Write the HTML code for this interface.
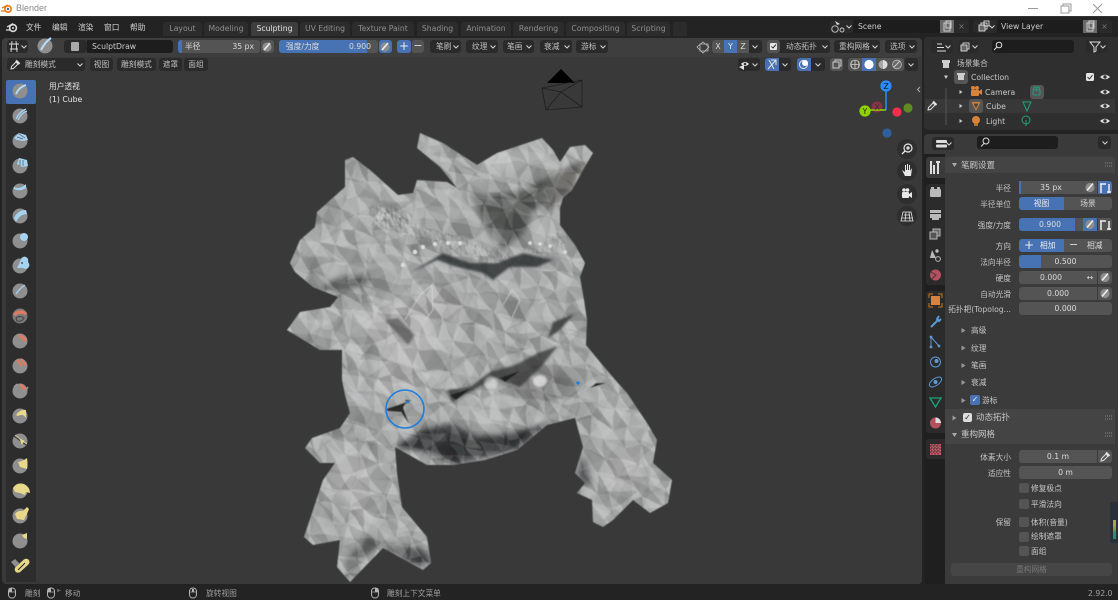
<!DOCTYPE html>
<html><head><meta charset="utf-8"><title>Blender</title>
<style>
html,body{margin:0;padding:0;background:#232323;}
#r{position:relative;width:1118px;height:600px;overflow:hidden;background:#232323;font:7.7px/15px "DejaVu Sans","Noto Sans CJK SC",sans-serif;color:#c8c8c8;filter:blur(.35px);}
#r>div,#r>svg{position:absolute;}
.t{position:absolute;white-space:nowrap;height:13px;line-height:15px;font-size:7.7px;}
.b{position:absolute;background:#545454;border-radius:3px;height:13px;line-height:14.5px;text-align:center;color:#dcdcdc;white-space:nowrap;font-size:7.7px;}
.u{background:#4772b3;color:#eee;}
.d{background:#2a2a2a;color:#c0c0c0;}
.k{background:#1d1d1d;text-align:left;color:#ccc;}
.tab{position:absolute;top:22px;height:14px;line-height:14px;background:#2c2c2c;color:#8f8f8f;text-align:center;border-radius:3px 3px 0 0;font-size:7.7px;}
.l{position:absolute;text-align:right;height:13px;line-height:15px;color:#c4c4c4;left:945px;width:66px;white-space:nowrap;font-size:7.7px;}
.c{position:absolute;width:10px;height:10px;background:#545454;border-radius:2px;left:1019px;}
</style></head><body>
<div id="r">
<div style="left:0;top:0;width:1118px;height:16px;background:#fff;"></div>
<div style="left:0;top:16px;width:1118px;height:1px;background:#333;"></div>
<span class="t" style="left:16px;top:2px;color:#8a8a8a;font:9px/13px 'Liberation Sans',sans-serif;">Blender</span>

<div style="left:2px;top:38px;width:920px;height:546px;background:#393939;border-radius:4px;"></div>
<div style="left:2px;top:38px;width:920px;height:19px;background:#3e3e3e;border-radius:4px 4px 0 0;"></div>
<div style="left:924px;top:37px;width:194px;height:93px;background:#2f2f2f;border-radius:4px 0 0 4px;"></div>
<div style="left:924px;top:134px;width:194px;height:450px;background:#1f1f1f;border-radius:4px 0 0 4px;"></div>
<div style="left:945px;top:154px;width:173px;height:430px;background:#3b3b3b;"></div>
<div style="left:924px;top:134px;width:194px;height:20px;background:#3a3a3a;border-radius:4px 0 0 0;"></div>
<div style="left:945px;top:157px;width:170px;height:16px;background:#444;border-radius:3px 3px 0 0;"></div>
<div style="left:945px;top:409px;width:170px;height:35px;background:#444;"></div>
<div style="left:926px;top:157px;width:19px;height:21px;background:#3b3b3b;border-radius:3px 0 0 3px;"></div>
<div style="left:926px;top:184px;width:19px;height:101px;background:#2b2b2b;border-radius:3px 0 0 3px;"></div>
<div style="left:926px;top:291px;width:19px;height:142px;background:#2b2b2b;border-radius:3px 0 0 3px;"></div>
<div style="left:926px;top:439px;width:19px;height:20px;background:#2b2b2b;border-radius:3px 0 0 3px;"></div>
<div style="left:925px;top:99px;width:190px;height:14px;background:#383838;"></div>

<!-- mesh + icons -->
<svg width="1118" height="600" viewBox="0 0 1118 600" style="left:0;top:0;">
<defs>
<g id="tile">
<path fill="#fff" fill-opacity=".17" d="M0 0L18 17L3 22ZM38 0L62 4L58 18ZM18 17L44 24L37 37ZM58 18L80 38L63 43ZM3 22L24 42L0 38ZM37 37L63 43L61 57ZM0 38L17 58L4 63ZM63 43L84 63L61 57ZM17 58L38 80L22 83ZM42 62L62 84L38 80Z"/>
<path fill="#fff" fill-opacity=".08" d="M22 3L38 0L44 24ZM62 4L80 0L83 22ZM18 17L37 37L24 42ZM44 24L63 43L37 37ZM24 42L37 37L42 62ZM61 57L84 63L80 80ZM4 63L22 83L0 80Z"/>
<path fill="#000" fill-opacity=".06" d="M0 0L22 3L18 17ZM44 24L58 18L63 43ZM83 22L80 38L58 18ZM0 38L24 42L17 58ZM37 37L61 57L42 62ZM17 58L42 62L38 80Z"/>
<path fill="#000" fill-opacity=".12" d="M22 3L44 24L18 17ZM38 0L58 18L44 24ZM3 22L18 17L24 42ZM24 42L42 62L17 58ZM61 57L80 80L62 84ZM42 62L61 57L62 84Z"/>
</g>
<pattern id="p1" width="80" height="80" patternUnits="userSpaceOnUse" patternTransform="translate(290 130) rotate(12) scale(.85)"><use href="#tile"/></pattern>
<pattern id="p2" width="80" height="80" patternUnits="userSpaceOnUse" patternTransform="translate(300 140) rotate(-38) scale(1.15)"><use href="#tile"/></pattern>
<pattern id="p4" width="80" height="80" patternUnits="userSpaceOnUse" patternTransform="translate(270 100) rotate(70) scale(1.9)"><use href="#tile"/></pattern>
<pattern id="p3" width="80" height="80" patternUnits="userSpaceOnUse" patternTransform="scale(.2) rotate(20)"><use href="#tile"/></pattern>
<clipPath id="sil"><path d="M417 148L420 133L443 143L477 165L497 153L527 143L542 138L553 150L560 162L570 147L585 145L593 153L583 170L572 190L563 198L560 208L560 225L575 245L585 263L580 277L584 300L587 320L586 345L600 362L617 382L627 393L637 408L647 423L657 440L653 463L672 480L668 503L650 513L633 500L613 520L603 527L593 522L592 500L577 493L585 483L575 473L583 447L575 418L547 425L517 450L485 460L453 465L427 465L395 447L397 473L402 507L427 537L431 563L423 570L383 548L350 582L337 567L340 540L313 545L304 537L313 510L323 480L335 463L320 463L305 448L312 438L340 428L350 413L345 395L342 380L342 350L320 350L287 330L300 312L330 307L338 297L313 287L295 272L290 263L300 240L315 227L317 212L345 187L345 160L353 157L370 170L398 195L413 193L417 180L447 182L457 188L440 167Z"/></clipPath>
<filter id="bl" x="-30%" y="-30%" width="160%" height="160%"><feGaussianBlur stdDeviation="7"/></filter>
<filter id="bm" x="-30%" y="-30%" width="160%" height="160%"><feGaussianBlur stdDeviation="3"/></filter>
<filter id="bs" x="-30%" y="-30%" width="160%" height="160%"><feGaussianBlur stdDeviation="1.1"/></filter>
<filter id="soft" x="-5%" y="-5%" width="110%" height="110%"><feGaussianBlur stdDeviation=".5"/></filter>
<filter id="warp" x="0" y="0" width="100%" height="100%"><feTurbulence type="fractalNoise" baseFrequency=".03" numOctaves="2" seed="7" result="n"/><feDisplacementMap in="SourceGraphic" in2="n" scale="11" xChannelSelector="R" yChannelSelector="G"/></filter>
<path id="ch" d="M-2.5 -1.5L0 1L2.5 -1.5" fill="none" stroke="#d0d0d0" stroke-width="1.1"/>
<g id="eye"><path d="M-5 0Q0 -4.6 5 0Q0 4.6 -5 0Z" fill="#e0e0e0"/><circle r="1.7" fill="#333"/></g>
<g id="drop"><path d="M-4 4L-3.5 1.5L1 -3L3 -1L-1.5 3.5Z" fill="none" stroke="#e0e0e0" stroke-width="1"/><path d="M1 -4.5L4.5 -1" stroke="#e0e0e0" stroke-width="2"/></g>
<g id="pen"><circle r="4.6" fill="#8c8c8c"/><path d="M-3 3L3 -4" stroke="#eee" stroke-width="1.6"/></g>
<g id="mouse"><rect x="-3.5" y="-5" width="7" height="10" rx="3.2" fill="none" stroke="#b4b4b4" stroke-width="1"/><path d="M-3 -1H3" stroke="#b4b4b4" stroke-width=".7"/></g>
<circle id="sp" r="7.5" fill="#8f8f8f"/>
</defs>

<!-- sculpt -->
<g filter="url(#soft)">
<g clip-path="url(#sil)">
<rect x="270" y="115" width="420" height="480" fill="#a4a6a6"/>
<g filter="url(#bl)">
<ellipse cx="395" cy="345" rx="42" ry="50" fill="#b2b2b2"/>
<ellipse cx="355" cy="490" rx="28" ry="42" fill="#aeaeae"/>
<ellipse cx="625" cy="470" rx="26" ry="30" fill="#aaaaaa"/>
<ellipse cx="605" cy="400" rx="14" ry="16" fill="#b0b0b0"/>
<ellipse cx="540" cy="385" rx="35" ry="22" fill="#858585"/>
<ellipse cx="500" cy="162" rx="40" ry="9" fill="#bbbbbb"/>
<ellipse cx="305" cy="285" rx="14" ry="22" fill="#909393"/>
<ellipse cx="445" cy="305" rx="35" ry="20" fill="#a6a6a6"/>
<ellipse cx="335" cy="520" rx="14" ry="18" fill="#8e9090"/>
</g>
<g filter="url(#bm)">
<path d="M467 192L487 197L523 190L557 173L553 197L533 210L527 230L503 250L487 230Z" fill="#454847" fill-opacity=".85"/>
<path d="M558 172L583 160L572 190L563 198L545 212Z" fill="#585552" fill-opacity=".85"/>
<path d="M395 447L423 430L453 423L477 437L513 433L570 417L547 425L517 450L453 465L427 453Z" fill="#2d302f" fill-opacity=".95"/>
<path d="M383 543L420 547L431 560L423 568L395 555Z" fill="#343837" fill-opacity=".9"/>
<path d="M337 277L370 273L368 284L342 292L320 290Z" fill="#3a3a39" fill-opacity=".75"/>
<path d="M575 473L585 483L577 493L592 480L585 455Z" fill="#3c403f" fill-opacity=".7"/>
<path d="M345 575L362 560L380 545L370 535L345 560Z" fill="#3c3c3c" fill-opacity=".6"/>
<path d="M505 345Q540 360 555 405" stroke="#6f7373" stroke-width="6" fill="none" opacity=".6"/>
<path d="M368 345Q370 400 350 430" stroke="#8b9191" stroke-width="8" fill="none" opacity=".45"/>
</g>
<g filter="url(#warp)">
<rect x="270" y="115" width="420" height="480" fill="url(#p4)" opacity=".35"/>
<rect x="270" y="115" width="420" height="480" fill="url(#p1)"/>
<rect x="270" y="115" width="420" height="480" fill="url(#p2)" opacity=".6"/>
</g>
<path d="M380 205L420 225L470 240L520 258L545 240L570 225L566 245L520 272L470 258L420 240L375 225Z" fill="url(#p3)" opacity=".7"/>
<path d="M362 205L372 222L400 232L415 215L395 205Z" fill="url(#p3)" opacity=".7"/>
<g filter="url(#bs)">
<path d="M410 273L443 253L470 263L497 263L523 253L553 260L537 267L510 267L493 280L483 273L457 267L437 260Z" fill="#2e3333" fill-opacity=".85"/>
<path d="M448 390L470 387L490 372L515 365L540 352L558 346L540 368L520 387L495 378L470 392L452 402Z" fill="#303333" fill-opacity=".75"/>
<path d="M553 322L574 314L560 330L548 338Z" fill="#2f3130" fill-opacity=".8"/>
<path d="M385 320L408 345L415 335L398 318Z" fill="#444" fill-opacity=".6"/>
<ellipse cx="491" cy="383" rx="6" ry="6" fill="#ddd" fill-opacity=".6"/>
<ellipse cx="540" cy="381" rx="7" ry="6" fill="#eee" fill-opacity=".75"/>
<ellipse cx="500" cy="402" rx="17" ry="7" fill="#ccc" fill-opacity=".5"/>
</g>
<path d="M386 409L398 405L412 400L404 400L408 402Q402 406 404 410L409 424L401 412L388 411Z" fill="#2b2b2b"/>
<path d="M590 388L606 383L596 383Z" fill="#222"/>
<path d="M450 395L470 389L456 400Z M500 378L520 371L505 382Z" fill="#222"/>
<g fill="#ddd"><circle cx="403" cy="265" r="2.2"/><circle cx="415" cy="252" r="2.2"/><circle cx="423" cy="247" r="2"/><circle cx="435" cy="244" r="2"/><circle cx="448" cy="243" r="2"/><circle cx="460" cy="243" r="2"/><circle cx="530" cy="243" r="1.8"/><circle cx="540" cy="244" r="1.8"/><circle cx="550" cy="246" r="1.8"/><circle cx="565" cy="252" r="1.8"/></g>
<path d="M405 320L420 295L432 285L433 310L425 320M503 305L512 290L520 300L512 318" fill="none" stroke="#eee" stroke-opacity=".5" stroke-width="1"/>
</g>
</g>
<circle cx="405" cy="409" r="19" fill="none" stroke="#1d7ee0" stroke-width="1.6"/>
<circle cx="408" cy="402" r="1.4" fill="#1d7ee0"/>
<circle cx="578" cy="383" r="1.6" fill="#1d7ee0"/>

<!-- camera wire -->
<path d="M547 83L561 69L575 83Z" fill="#000"/>
<path d="M542 88L582 80L582 107L546 110ZM542 88L561 92L582 107M546 110L561 92L582 80" fill="none" stroke="#1f1f1f" stroke-width=".8"/>

<!-- gizmo -->
<circle cx="877" cy="107" r="5.5" fill="#883246"/><circle cx="897" cy="112" r="4.6" fill="#f2304e"/><circle cx="908" cy="108" r="4.6" fill="#5f8a24"/><circle cx="887" cy="133" r="4.6" fill="#2f5f9c"/>
<path d="M886 91V110" stroke="#2a8cff" stroke-width="1.5"/><path d="M869 110H886" stroke="#8fd400" stroke-width="1.5"/>
<circle cx="886" cy="86" r="5.6" fill="#2a8cff"/><circle cx="865" cy="111" r="5.6" fill="#8fd400"/>
<!-- nav -->
<g fill="#2e2e2e"><circle cx="907" cy="149" r="10"/><circle cx="907" cy="171" r="10"/><circle cx="907" cy="194" r="10"/><circle cx="907" cy="216" r="10"/></g>
<g fill="none" stroke="#e8e8e8"><circle cx="908" cy="148" r="4" stroke-width="1.2"/><path d="M905 151L902 154M906 148H910M908 146V150" stroke-width="1.3"/></g>
<path d="M902 170L905 172V165H906V170H907V164H908V170H909V165H910V171L912 168L911 176H905Z" fill="#e8e8e8"/>
<g fill="#e8e8e8"><rect x="902" y="192" width="7" height="6" rx="1"/><circle cx="904" cy="190" r="1.8"/><circle cx="907.5" cy="190" r="1.8"/><path d="M909 194L912 192V198L909 196Z"/></g>
<path d="M903 212H911L913 221H901ZM904 215H910M902 218H912M906 212L905 221M909 212L910 221" fill="none" stroke="#e8e8e8" stroke-width=".8"/>

<!-- toolbar -->
<rect x="6" y="104" width="30" height="478" fill="#2d2d2d"/>
<rect x="6" y="80" width="30" height="24" rx="2" fill="#4772b3"/>
<g transform="translate(20,91)"><circle r="7.5" fill="#8f8f8f"/><path d="M-4 3Q-1 -4 6 -6" stroke="#b8defa" stroke-width="1.8" fill="none"/></g>
<g transform="translate(20,116)"><use href="#sp"/><path d="M-4 3Q-1 -4 6 -7M-2 4Q1 -3 7 -5" stroke="#a6d3f0" stroke-width="1.3" fill="none"/></g>
<g transform="translate(20,141)"><use href="#sp"/><path d="M-6 -3L-1 -8L6 -6L8 -1L3 0L-3 -1Z" fill="#a6d3f0"/><path d="M-3 -4L3 -2M-1 -7L5 -3" stroke="#555" stroke-width=".7"/></g>
<g transform="translate(20,166)"><use href="#sp"/><path d="M-3 -2L-1 -8L7 -6L8 0L2 1Z" fill="#a6d3f0"/><path d="M0 -6V0M3 -6V0" stroke="#555" stroke-width=".7"/></g>
<g transform="translate(20,191)"><use href="#sp"/><path d="M-6 -4Q0 -1 6 -7L6 -3Q0 1 -6 -2Z" fill="#a6d3f0"/></g>
<g transform="translate(20,216)"><use href="#sp"/><path d="M-6 2Q-2 -6 6 -6L7 -2Q0 -2 -4 6Z" fill="#a6d3f0"/></g>
<g transform="translate(20,241)"><use href="#sp"/><circle cx="4" cy="-4" r="4" fill="#a6d3f0"/></g>
<g transform="translate(20,266)"><use href="#sp"/><path d="M1 -7A3 3 0 0 1 8 -4A3 3 0 0 1 3 2L-3 2L-1 -2Z" fill="#a6d3f0"/><circle cx="2" cy="-3" r="1" fill="#555"/></g>
<g transform="translate(20,291)"><use href="#sp"/><path d="M-4 3Q0 -3 5 -6" stroke="#a6d3f0" stroke-width="1.3" fill="none"/></g>
<g transform="translate(20,316)"><circle r="7.5" fill="#7a7a7a"/><path d="M-7 -2Q0 -9 7 -3L5 -1Q0 -4 -5 0Z" fill="#e07a5f"/><path d="M-4 2Q0 -1 4 2Q2 6 -3 5Z" fill="none" stroke="#444"/></g>
<g transform="translate(20,341)"><use href="#sp"/><path d="M0 -7L7 -2L5 1L-2 -5Z" fill="#e07a5f"/></g>
<g transform="translate(20,366)"><use href="#sp"/><path d="M-3 -6L2 0M1 -7L6 -1" stroke="#e07a5f" stroke-width="2.2"/></g>
<g transform="translate(20,391)"><use href="#sp"/><path d="M-1 -6L4 0L6 -3L2 -7Z" fill="#e07a5f"/><path d="M-6 -4L-3 -7M6 -1L8 -4" stroke="#999" stroke-width="1.5"/></g>
<g transform="translate(20,416)"><use href="#sp"/><path d="M-4 -1Q0 -7 6 -6L6 2Q3 -3 -2 0Z" fill="#e8d88a"/></g>
<g transform="translate(20,441)"><use href="#sp"/><path d="M-6 -5L6 4" stroke="#333" stroke-width="1"/><path d="M-5 -6L7 3M0 -2L4 0L2 3Z" stroke="#e8d88a" fill="#e8d88a" stroke-width=".7"/></g>
<g transform="translate(20,466)"><use href="#sp"/><path d="M-2 -4Q3 -5 7 -8Q8 -2 7 3L0 1Z" fill="#e8d88a"/></g>
<g transform="translate(20,491)"><use href="#sp"/><path d="M-7 -3Q-3 -9 4 -7Q10 -4 10 2L6 1L5 4L0 2L-5 1Z" fill="#e8d88a"/></g>
<g transform="translate(20,516)"><use href="#sp"/><path d="M-5 -2Q-2 -6 3 -5L7 -9L9 -7L7 -2L4 4L-3 3Z" fill="#e8d88a"/></g>
<g transform="translate(20,541)"><use href="#sp"/><path d="M2 -6L7 -8L7 -2L4 -3Z" fill="#e8d88a"/></g>
<g transform="translate(20,566)"><path d="M-9 -4L-5 -7L2 0L-2 4Z" fill="#8f8f8f"/><rect x="-7" y="-3" width="18" height="7" rx="3.5" transform="rotate(-42 1 0)" fill="#e8d88a" stroke="#1f1f1f" stroke-width=".3"/><path d="M-2 4L5 -3" stroke="#222" stroke-width="1"/></g>

<!-- top blender logo -->
<g transform="translate(7,9)"><circle cx="1" r="3.2" fill="none" stroke="#e87d0d" stroke-width="1.7"/><path d="M-5 -1L1 -4M-6 2H-1" stroke="#e87d0d" stroke-width="1.3"/><circle cx="1" r="1.2" fill="#36a"/></g>
<g transform="translate(12,28)" fill="none" stroke="#ddd"><circle cx="1" r="3.4" stroke-width="1.6"/><path d="M-5 -1L1 -4.5M-6 2H-1" stroke-width="1.2"/><circle cx="1" r="1" fill="#ddd" stroke="none"/></g>
<!-- window ctrl -->
<path d="M1028 8.5H1038" stroke="#999"/><path d="M1061 6H1069V13H1061ZM1063 6V4H1071V11H1069" fill="none" stroke="#999"/><path d="M1093 4L1102 13M1102 4L1093 13" stroke="#999"/>
<path d="M676 28H684M680 24V32" stroke="#aaa"/>
</svg>

<!-- tabs -->
<div class="tab" style="left:163px;width:39px;">Layout</div>
<div class="tab" style="left:204px;width:44px;">Modeling</div>
<div class="tab" style="left:251px;width:47px;background:#3d3d3d;color:#e6e6e6;">Sculpting</div>
<div class="tab" style="left:300px;width:50px;">UV Editing</div>
<div class="tab" style="left:352px;width:62px;">Texture Paint</div>
<div class="tab" style="left:417px;width:41px;">Shading</div>
<div class="tab" style="left:461px;width:50px;">Animation</div>
<div class="tab" style="left:513px;width:51px;">Rendering</div>
<div class="tab" style="left:566px;width:59px;">Compositing</div>
<div class="tab" style="left:627px;width:43px;">Scripting</div>
<div class="tab" style="left:673px;width:14px;"></div>
<span class="t" style="left:26px;top:20px;color:#d4d4d4;">文件</span>
<span class="t" style="left:52px;top:20px;color:#d4d4d4;">编辑</span>
<span class="t" style="left:78px;top:20px;color:#d4d4d4;">渲染</span>
<span class="t" style="left:104px;top:20px;color:#d4d4d4;">窗口</span>
<span class="t" style="left:130px;top:20px;color:#d4d4d4;">帮助</span>

<!-- scene -->
<div class="b d" style="left:830px;top:20px;width:23px;"></div>
<div class="b k" style="left:853px;top:20px;width:87px;padding-left:5px;box-sizing:border-box;">Scene</div>
<div class="b" style="left:940px;top:20px;width:14px;background:#6a6a6a;border-radius:0;"></div>
<div class="b d" style="left:954px;top:20px;width:15px;color:#777;border-radius:0 3px 3px 0;">×</div>
<div class="b d" style="left:973px;top:20px;width:24px;"></div>
<div class="b k" style="left:997px;top:20px;width:86px;padding-left:4px;box-sizing:border-box;">View Layer</div>
<div class="b" style="left:1083px;top:20px;width:14px;background:#6a6a6a;border-radius:0;"></div>
<div class="b d" style="left:1097px;top:20px;width:15px;color:#777;border-radius:0 3px 3px 0;">×</div>

<!-- tool row 1 -->
<div class="b d" style="left:7px;top:40px;width:21px;"></div>
<div class="b d" style="left:64px;top:40px;width:23px;"></div>
<div class="b k" style="left:87px;top:40px;width:86px;padding-left:5px;box-sizing:border-box;border-radius:0 3px 3px 0;">SculptDraw</div>
<div class="b" style="left:178px;top:40px;width:82px;text-align:left;"><span style="position:absolute;left:0;top:0;width:4px;height:13px;background:#4772b3;border-radius:3px 0 0 3px;"></span><span style="position:absolute;left:7px;">半径</span><span style="position:absolute;right:6px;">35 px</span></div>
<div class="b" style="left:261px;top:40px;width:13px;"></div>
<div class="b" style="left:279px;top:40px;width:99px;text-align:left;overflow:hidden;"><span style="position:absolute;left:0;top:0;width:88px;height:13px;background:#4772b3;"></span><span style="position:absolute;left:7px;">强度/力度</span><span style="position:absolute;right:7px;">0.900</span></div>
<div class="b u" style="left:379px;top:40px;width:13px;"></div>
<div class="b u" style="left:397px;top:40px;width:14px;font-size:12px;line-height:12px;">+</div>
<div class="b" style="left:412px;top:40px;width:12px;font-size:11px;line-height:12px;">−</div>
<div class="b d" style="left:430px;top:40px;width:31px;text-align:left;padding-left:6px;box-sizing:border-box;">笔刷</div>
<div class="b d" style="left:466px;top:40px;width:32px;text-align:left;padding-left:6px;box-sizing:border-box;">纹理</div>
<div class="b d" style="left:503px;top:40px;width:31px;text-align:left;padding-left:4px;box-sizing:border-box;">笔画</div>
<div class="b d" style="left:540px;top:40px;width:32px;text-align:left;padding-left:4px;box-sizing:border-box;">衰减</div>
<div class="b d" style="left:576px;top:40px;width:32px;text-align:left;padding-left:5px;box-sizing:border-box;">游标</div>
<div class="b" style="left:712px;top:40px;width:12px;border-radius:3px 0 0 3px;">X</div>
<div class="b u" style="left:724px;top:40px;width:13px;border-radius:0;">Y</div>
<div class="b" style="left:737px;top:40px;width:12px;border-radius:0;">Z</div>
<div class="b d" style="left:749px;top:40px;width:13px;border-radius:0 3px 3px 0;"></div>
<div class="b d" style="left:767px;top:40px;width:63px;text-align:left;padding-left:19px;box-sizing:border-box;">动态拓扑</div>
<div class="b" style="left:767px;top:40px;width:13px;"></div>
<div class="b d" style="left:834px;top:40px;width:46px;text-align:left;padding-left:5px;box-sizing:border-box;">重构网格</div>
<div class="b d" style="left:885px;top:40px;width:32px;text-align:left;padding-left:5px;box-sizing:border-box;">选项</div>

<!-- tool row 2 -->
<div class="b d" style="left:7px;top:58px;width:78px;text-align:left;padding-left:18px;box-sizing:border-box;">雕刻模式</div>
<div class="b d" style="left:90px;top:58px;width:23px;">视图</div>
<div class="b d" style="left:117px;top:58px;width:39px;">雕刻模式</div>
<div class="b d" style="left:159px;top:58px;width:23px;">遮罩</div>
<div class="b d" style="left:184px;top:58px;width:24px;">面组</div>
<div class="b d" style="left:738px;top:58px;width:22px;"></div>
<div class="b u" style="left:765px;top:58px;width:14px;border-radius:3px 0 0 3px;"></div>
<div class="b d" style="left:779px;top:58px;width:12px;border-radius:0 3px 3px 0;"></div>
<div class="b u" style="left:797px;top:58px;width:14px;border-radius:3px 0 0 3px;"></div>
<div class="b d" style="left:811px;top:58px;width:14px;border-radius:0 3px 3px 0;"></div>
<div class="b" style="left:830px;top:58px;width:13px;"></div>
<div class="b" style="left:848px;top:58px;width:14px;border-radius:3px 0 0 3px;"></div>
<div class="b u" style="left:862px;top:58px;width:14px;border-radius:0;"></div>
<div class="b" style="left:876px;top:58px;width:14px;border-radius:0;"></div>
<div class="b" style="left:890px;top:58px;width:14px;border-radius:0 3px 3px 0;"></div>
<div class="b d" style="left:905px;top:58px;width:13px;"></div>

<span class="t" style="left:49px;top:79px;color:#e6e6e6;">用户透视</span>
<span class="t" style="left:49px;top:92px;color:#e6e6e6;">(1) Cube</span>

<!-- gizmo letters -->
<span class="t" style="left:883.5px;top:79px;color:#111;">Z</span>
<span class="t" style="left:862.5px;top:104px;color:#222;">Y</span>
<span class="t" style="left:874.5px;top:100px;color:#333;">X</span>

<!-- outliner -->
<div class="b d" style="left:931px;top:40px;width:22px;"></div>
<div class="b d" style="left:958px;top:40px;width:21px;"></div>
<div class="b k" style="left:992px;top:40px;width:82px;"></div>
<div class="b d" style="left:1086px;top:40px;width:22px;"></div>
<span class="t" style="left:957px;top:56px;">场景集合</span>
<span class="t" style="left:971px;top:70px;">Collection</span>
<span class="t" style="left:985px;top:85px;">Camera</span>
<span class="t" style="left:986px;top:99px;">Cube</span>
<span class="t" style="left:986px;top:114px;">Light</span>

<!-- properties -->
<div class="b d" style="left:932px;top:137px;width:22px;"></div>
<div class="b k" style="left:977px;top:136px;width:81px;"></div>
<div class="b d" style="left:1098px;top:136px;width:13px;"></div>
<span class="t" style="left:961px;top:159px;font-size:8.5px;">笔刷设置</span>
<div class="l" style="top:181px;">半径</div>
<div class="b" style="left:1019px;top:181px;width:64px;border-radius:3px 0 0 3px;"><span style="position:absolute;left:0;top:0;width:2px;height:13px;background:#4772b3;"></span>35 px</div>
<div class="b" style="left:1083px;top:181px;width:14px;border-radius:0;"></div>
<div class="b u" style="left:1098px;top:181px;width:14px;border-radius:0 3px 3px 0;"></div>
<div class="l" style="top:197px;">半径单位</div>
<div class="b u" style="left:1019px;top:197px;width:45px;border-radius:3px 0 0 3px;">视图</div>
<div class="b" style="left:1064px;top:197px;width:48px;border-radius:0 3px 3px 0;">场景</div>
<div class="l" style="top:218px;">强度/力度</div>
<div class="b" style="left:1019px;top:218px;width:64px;border-radius:3px 0 0 3px;"><span style="position:absolute;left:0;top:0;width:56px;height:13px;background:#4772b3;border-radius:3px 0 0 3px;"></span><span style="position:absolute;left:0;width:62px;">0.900</span></div>
<div class="b u" style="left:1083px;top:218px;width:14px;border-radius:0;"></div>
<div class="b" style="left:1098px;top:218px;width:14px;border-radius:0 3px 3px 0;"></div>
<div class="l" style="top:239px;">方向</div>
<div class="b u" style="left:1019px;top:239px;width:45px;border-radius:3px 0 0 3px;text-align:left;"><span style="position:absolute;left:5px;font-size:12px;line-height:12px;">+</span><span style="position:absolute;left:21px;">相加</span></div>
<div class="b" style="left:1064px;top:239px;width:48px;border-radius:0 3px 3px 0;text-align:left;"><span style="position:absolute;left:5px;font-size:11px;line-height:12px;">−</span><span style="position:absolute;left:23px;">相减</span></div>
<div class="l" style="top:255px;">法向半径</div>
<div class="b" style="left:1019px;top:255px;width:93px;"><span style="position:absolute;left:0;top:0;width:22px;height:13px;background:#4772b3;border-radius:3px 0 0 3px;"></span><span style="position:relative;">0.500</span></div>
<div class="l" style="top:271px;">硬度</div>
<div class="b" style="left:1019px;top:271px;width:64px;border-radius:3px 0 0 3px;">0.000</div>
<div class="b" style="left:1083px;top:271px;width:14px;border-radius:0;">↔</div>
<div class="b" style="left:1098px;top:271px;width:14px;border-radius:0 3px 3px 0;"></div>
<div class="l" style="top:287px;">自动光滑</div>
<div class="b" style="left:1019px;top:287px;width:78px;border-radius:3px 0 0 3px;">0.000</div>
<div class="b" style="left:1098px;top:287px;width:14px;border-radius:0 3px 3px 0;"></div>
<div class="l" style="top:302px;">拓扑耙(Topolog...</div>
<div class="b" style="left:1019px;top:302px;width:93px;">0.000</div>
<span class="t" style="left:971px;top:323px;">高级</span>
<span class="t" style="left:971px;top:341px;">纹理</span>
<span class="t" style="left:971px;top:358px;">笔画</span>
<span class="t" style="left:971px;top:375px;">衰减</span>
<div class="b u" style="left:970px;top:395px;width:10px;height:10px;line-height:10px;border-radius:2px;"><span style="font-size:8px;">✓</span></div>
<span class="t" style="left:982px;top:393px;">游标</span>
<div class="b" style="left:963px;top:413px;width:9px;height:9px;line-height:9px;border-radius:2px;background:#ddd;color:#222;"><span style="font-size:8px;">✓</span></div>
<span class="t" style="left:976px;top:411px;font-size:8.5px;">动态拓扑</span>
<span class="t" style="left:961px;top:428px;font-size:8.5px;">重构网格</span>
<div class="l" style="top:450px;">体素大小</div>
<div class="b" style="left:1019px;top:450px;width:78px;border-radius:3px 0 0 3px;">0.1 m</div>
<div class="b" style="left:1098px;top:450px;width:14px;border-radius:0 3px 3px 0;"></div>
<div class="l" style="top:466px;">适应性</div>
<div class="b" style="left:1019px;top:466px;width:93px;">0 m</div>
<div class="c" style="top:483px;"></div><span class="t" style="left:1031px;top:481px;">修复极点</span>
<div class="c" style="top:499px;"></div><span class="t" style="left:1031px;top:497px;">平滑法向</span>
<div class="l" style="top:515px;">保留</div>
<div class="c" style="top:517px;"></div><span class="t" style="left:1031px;top:515px;">体积(音量)</span>
<div class="c" style="top:532px;"></div><span class="t" style="left:1031px;top:529px;">绘制遮罩</span>
<div class="c" style="top:546px;"></div><span class="t" style="left:1031px;top:544px;">面组</span>
<div class="b" style="left:951px;top:563px;width:161px;background:#464646;color:#777;">重构网格</div>
<div style="left:1110px;top:502px;width:8px;height:41px;background:#29303a;border-radius:2px 0 0 2px;"></div>
<div style="left:1113px;top:520px;width:3px;height:19px;background:linear-gradient(#a7a83c 30%,#2c8b76 70%);"></div>

<!-- status -->
<span class="t" style="left:25px;top:586px;color:#a0a0a0;">雕刻</span>
<span class="t" style="left:65px;top:586px;color:#a0a0a0;">移动</span>
<span class="t" style="left:206px;top:586px;color:#a0a0a0;">旋转视图</span>
<span class="t" style="left:387px;top:586px;color:#a0a0a0;">雕刻上下文菜单</span>
<span class="t" style="left:1088px;top:586px;color:#a0a0a0;">2.92.0</span>

<!-- top overlay icons -->
<svg width="1118" height="600" viewBox="0 0 1118 600" style="left:0;top:0;">
<use href="#ch" x="24" y="47"/><use href="#ch" x="80" y="65"/>
<use href="#ch" x="456" y="47"/><use href="#ch" x="493" y="47"/><use href="#ch" x="529" y="47"/><use href="#ch" x="567" y="47"/><use href="#ch" x="603" y="47"/>
<use href="#ch" x="755" y="47"/><use href="#ch" x="825" y="47"/><use href="#ch" x="875" y="47"/><use href="#ch" x="912" y="47"/>
<use href="#ch" x="755" y="65"/><use href="#ch" x="785" y="65"/><use href="#ch" x="818" y="65"/><use href="#ch" x="911" y="65"/>
<use href="#ch" x="849" y="27"/><use href="#ch" x="992" y="27"/>
<use href="#ch" x="948" y="47"/><use href="#ch" x="975" y="47"/><use href="#ch" x="1103" y="47"/><use href="#ch" x="949" y="144"/><use href="#ch" x="1105" y="143"/>
<g transform="translate(14,46)" stroke="#ddd" fill="none" stroke-width=".9"><path d="M-5 -2H5M-4 3H4M-2 -5L-3 6M2 -5L3 6"/></g>
<g transform="translate(45,46)"><circle r="7.5" fill="#8f8f8f"/><path d="M-4 4Q0 -4 6 -8" stroke="#b8defa" stroke-width="2" fill="none"/></g>
<rect x="71" y="42" width="8" height="9" rx="1" fill="#aaa"/>
<use href="#pen" x="267" y="47"/><use href="#pen" x="385" y="47"/>
<path d="M700 44L708 44L708 51L700 51Z M703 42L709 47L703 53L697 47Z" fill="none" stroke="#bbb" stroke-width=".8"/>
<rect x="770" y="43" width="7" height="7" rx="1" fill="#e6e6e6"/><path d="M771.5 46.5L773 48L776 44.5" stroke="#333" fill="none"/>
<use href="#drop" x="15" y="65"/>
<g transform="translate(745,64)"><path d="M-4 0Q0 -4 4 0Q0 4 -4 0Z" fill="#e6e6e6"/><circle r="1.3" fill="#333"/><path d="M-6 3L-1 1V6Z" fill="#e6e6e6"/></g>
<path d="M768 69L776 60M771 60H776V65M769 60L774 69" stroke="#e6e6e6" fill="none"/>
<circle cx="803.5" cy="64.5" r="4" fill="none" stroke="#e6e6e6"/><circle cx="805" cy="63" r="3" fill="#fff"/>
<path d="M833 62H839V68H833ZM835 62V60H841V66H839" fill="none" stroke="#ccc"/>
<g fill="none" stroke="#d0d0d0" stroke-width=".8"><circle cx="855" cy="64.5" r="4.4"/><path d="M850.6 64.5H859.4M855 60V69M852 61Q850 64.5 852 68M858 61Q860 64.5 858 68"/></g>
<circle cx="869" cy="64.5" r="4.6" fill="#fff"/>
<circle cx="883" cy="64.5" r="4.4" fill="#a8a8a8"/><path d="M883 60A4.5 4.5 0 0 1 883 69Z" fill="#ddd"/>
<circle cx="897" cy="64.5" r="4.4" fill="#6a6a6a" stroke="#ccc" stroke-width=".7"/><path d="M894 67L900 61" stroke="#ccc"/>
<g fill="none" stroke="#ccc" stroke-width=".9"><circle cx="835" cy="29" r="3.2"/><circle cx="842" cy="30" r="2"/></g>
<path d="M835 21L840 24L837 25Z" fill="#ddd"/>
<g fill="none" stroke="#ddd" stroke-width=".9"><rect x="981" y="23" width="6" height="6"/><rect x="979" y="25" width="6" height="6" fill="#666"/><rect x="984" y="21" width="5" height="5"/></g>
<g stroke="#ccc" fill="none" stroke-width="1"><rect x="944" y="23" width="6" height="8"/><rect x="946" y="21" width="5" height="7"/><rect x="1087" y="23" width="6" height="8"/><rect x="1089" y="21" width="5" height="7"/></g>

<!-- outliner icons -->
<g stroke="#ddd" fill="none" stroke-width="1"><path d="M937 44H942M937 47.5H944M937 51H946"/></g>
<g fill="none" stroke="#ddd" stroke-width=".9"><rect x="963" y="43" width="6" height="6"/><rect x="961" y="45" width="6" height="6" fill="#666"/></g>
<circle cx="999" cy="45" r="2.8" fill="none" stroke="#ddd"/><path d="M997 47L994 50" stroke="#ddd"/>
<path d="M1090 42H1100L1096 47V51L1094 52V47Z" fill="none" stroke="#ddd"/>
<path d="M942 60H950V63H942ZM943 63H949V68H943Z" fill="#ccc"/>
<rect x="954" y="70" width="14" height="14" rx="3" fill="#555"/><path d="M957 73H965V75H957ZM958 75H964V80H958Z" fill="#ccc"/>
<path d="M944 75.5H948L946 79Z" fill="#ccc"/>
<path d="M946 88V125" stroke="#555"/>
<path d="M959.5 90V94L962.5 92ZM959.5 104V108L962.5 106ZM959.5 119V123L962.5 121Z" fill="#ccc"/>
<rect x="1086" y="73" width="8" height="8" rx="1.5" fill="#e6e6e6"/><path d="M1087.5 77L1089.5 79L1092.5 75" stroke="#333" fill="none"/>
<use href="#eye" x="1105" y="77"/><use href="#eye" x="1105" y="92"/><use href="#eye" x="1105" y="106"/><use href="#eye" x="1105" y="121"/>
<g fill="#d9823c"><rect x="971" y="90" width="8" height="6" rx="1"/><circle cx="973" cy="88" r="2"/><circle cx="977" cy="88" r="2"/><path d="M979 91L982 89V95L979 93Z"/></g>
<rect x="1030" y="85" width="14" height="14" rx="3" fill="#555"/>
<g fill="none" stroke="#1e9c80"><rect x="1033" y="90" width="7" height="5" rx="1"/><circle cx="1035" cy="88.5" r="1.5"/><circle cx="1038" cy="88.5" r="1.5"/></g>
<rect x="969" y="99" width="14" height="14" rx="3" fill="#555"/><path d="M971.5 102H980.5L976 111Z" fill="#d9823c"/><path d="M973.5 103.5H978.5L976 108.5Z" fill="#444"/>
<path d="M1023 102H1031L1027 111Z" fill="none" stroke="#1ea37a"/>
<path d="M976 116A3.5 3.5 0 0 1 976 124A3.5 3.5 0 0 1 976 116Z" fill="#d9823c"/><rect x="974" y="123.5" width="4" height="2.5" fill="#b87030"/>
<circle cx="1026" cy="120" r="4" fill="none" stroke="#1ea37a"/><path d="M1026 120V126" stroke="#1ea37a"/>
<use href="#drop" x="932" y="106"/>

<!-- props header -->
<rect x="936" y="140" width="11" height="3" rx="1" fill="#ddd"/><rect x="936" y="144.5" width="11" height="3" rx="1" fill="#ddd"/>
<circle cx="986" cy="141" r="3" fill="none" stroke="#ddd"/><path d="M984 143.5L981 146.5" stroke="#ddd"/>
<!-- prop tabs -->
<g><path d="M931 161V174M934 165V174" stroke="#ddd" stroke-width="2"/><path d="M938 161V174M936 162L940 162" stroke="#ddd" stroke-width="2"/></g>
<g fill="#b9b9b9"><rect x="930" y="189" width="11" height="8" rx="1"/><rect x="931" y="187" width="3" height="2"/><rect x="937" y="187" width="3" height="2"/></g>
<g fill="#b9b9b9"><rect x="930" y="210" width="11" height="3"/><rect x="930" y="214" width="11" height="4"/><rect x="932" y="217" width="7" height="3"/></g>
<g fill="none" stroke="#b9b9b9"><rect x="933" y="229" width="7" height="7" fill="#666"/><rect x="930" y="232" width="7" height="7" fill="#555"/></g>
<g fill="#b9b9b9"><path d="M932 250L936 258H930Z"/><circle cx="938" cy="259" r="2.4" fill="none" stroke="#b9b9b9"/><circle cx="937" cy="251" r="1.7"/></g>
<circle cx="935.5" cy="275" r="5.5" fill="#b5515e"/><path d="M931 272L936 275L932 279" stroke="#3a3a3a" fill="none"/>
<rect x="931" y="296" width="9" height="9" fill="#d9823c"/><path d="M929 298V294H933M938 294H942V298M942 303V307H938M933 307H929V303" stroke="#c9761f" fill="none"/>
<path d="M931 327L938 320M939 316L937 319L939 321L941 319" stroke="#5b9ad6" stroke-width="2" fill="none"/>
<path d="M931 337L939 346M931 337V347" stroke="#5b9ad6" fill="none"/><g fill="#5b9ad6"><circle cx="931" cy="337" r="1.4"/><circle cx="931" cy="347" r="1.4"/><circle cx="939" cy="346" r="1.4"/></g>
<circle cx="935.5" cy="362" r="5" fill="none" stroke="#5b9ad6"/><circle cx="936.5" cy="361" r="2" fill="#5b9ad6"/>
<g transform="rotate(-35 935.5 382)"><ellipse cx="935.5" cy="382" rx="7" ry="3.5" fill="none" stroke="#5b9ad6"/></g><circle cx="935.5" cy="382" r="2" fill="#5b9ad6"/>
<path d="M930 398H941L935.5 407Z" fill="none" stroke="#1ea37a" stroke-width="1.3"/>
<circle cx="935.5" cy="423" r="5.5" fill="#b5515e"/><path d="M935.5 417.5A5.5 5.5 0 0 1 941 423H935.5Z" fill="#ddd"/>
<g fill="#c65a66"><rect x="930" y="444" width="11" height="11"/></g><path d="M930 446H941M930 449H941M930 452H941M932 444V455M935 444V455M938 444V455" stroke="#2f2f2f" stroke-width=".9" stroke-dasharray="1.6 1.4"/>
<!-- panel arrows -->
<path d="M952 163H957L954.5 167ZM952 433H957L954.5 437Z" fill="#aaa"/>
<path d="M961.5 328V333L965.5 330.5ZM961.5 345.5V350.5L965.5 348ZM961.5 363V368L965.5 365.5ZM961.5 380V385L965.5 382.5ZM961.5 398V403L965.5 400.5ZM952.5 415.5V420.5L956.5 418Z" fill="#999"/>
<g fill="#888"><path d="M1105 163H1112M1105 166H1112M1105 416H1112M1105 419H1112M1105 433H1112M1105 436H1112" stroke="#888" stroke-dasharray="1 1"/></g>
<!-- prop field icons -->
<use href="#pen" x="1090" y="187.5"/><use href="#pen" x="1090" y="224.5"/><use href="#pen" x="1105" y="277.5"/><use href="#pen" x="1105" y="293.5"/><use href="#drop" x="1105" y="457"/>
<g fill="none" stroke="#eee" stroke-width="1.5"><path d="M1101 184V193M1106 184H1100M1109 184V193M1107 192H1111"/><path d="M1101 221V230M1106 221H1100M1109 221V230M1107 229H1111"/></g>
<!-- status icons -->
<use href="#mouse" x="12" y="593"/><use href="#mouse" x="51" y="593"/><use href="#mouse" x="193" y="593"/><use href="#mouse" x="375" y="593"/>
<rect x="8.7" y="588.2" width="3.3" height="4" fill="#b4b4b4"/><rect x="47.7" y="588.2" width="3.3" height="4" fill="#b4b4b4"/><rect x="192" y="589" width="2" height="3" fill="#b4b4b4"/><rect x="375" y="588.2" width="3.3" height="4" fill="#b4b4b4"/>
<path d="M58 589V592M60 590V591" stroke="#b4b4b4" stroke-width=".8"/>
<path d="M920 87L917.5 89.5L920 92" fill="none" stroke="#aaa"/>
</svg>
</div>
</body></html>
